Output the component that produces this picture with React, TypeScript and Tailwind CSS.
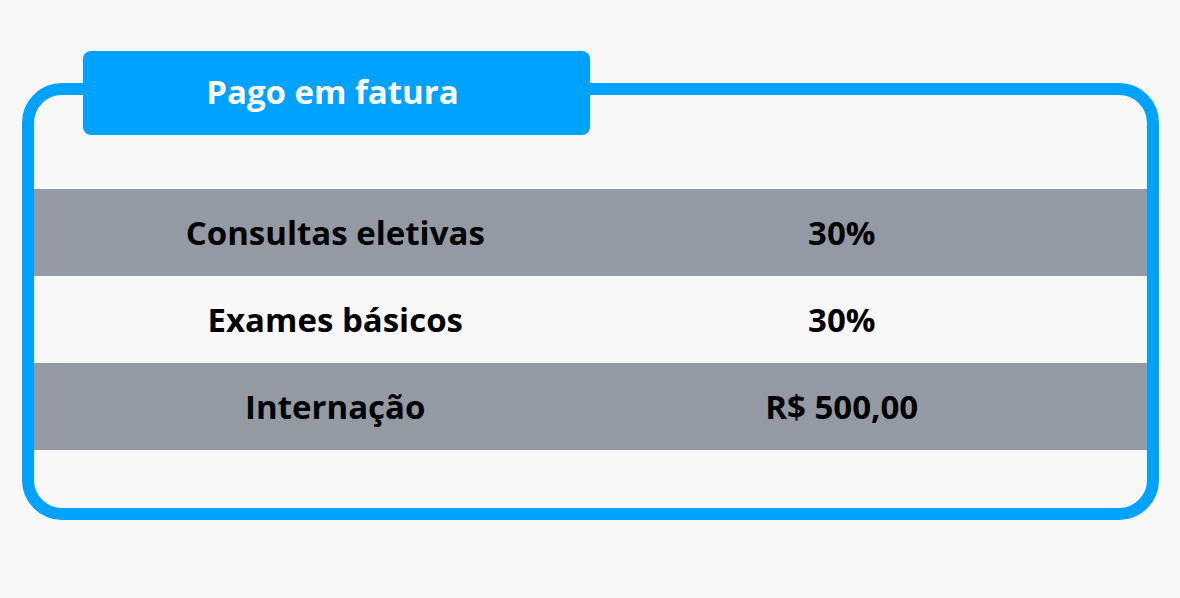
const rows = [
  { label: 'Consultas eletivas', value: '30%', shaded: true },
  { label: 'Exames básicos', value: '30%', shaded: false },
  { label: 'Internação', value: 'R$ 500,00', shaded: true },
];

export default function App() {
  return (
    <div
      className="h-[598px] w-[1180px] bg-[#f8f8f8] pl-[22px] pt-[83px]"
      style={{ fontFamily: '"Open Sans", "Noto Sans", sans-serif' }}
    >
      <div className="relative h-[437px] w-[1137px] rounded-[40px] border-[12px] border-[#00a2ff]">
        <div className="absolute left-[49px] top-[-44px] flex h-[84px] w-[507px] items-center justify-center rounded-[8px] bg-[#00a2ff] pb-[2px] pr-[8px]">
          <span className="text-[33px] font-bold text-white">Pago em fatura</span>
        </div>

        <div className="mt-[94px]">
          {rows.map((row) => (
            <div
              key={row.label}
              className={`grid h-[87px] grid-cols-2 items-center pl-[48px] pr-[52px] ${row.shaded ? 'bg-[#939aa3]' : ''}`}
            >
              <span className="text-center text-[33px] font-bold text-black">{row.label}</span>
              <span className="text-center text-[33px] font-bold text-black">{row.value}</span>
            </div>
          ))}
        </div>
      </div>
    </div>
  );
}
